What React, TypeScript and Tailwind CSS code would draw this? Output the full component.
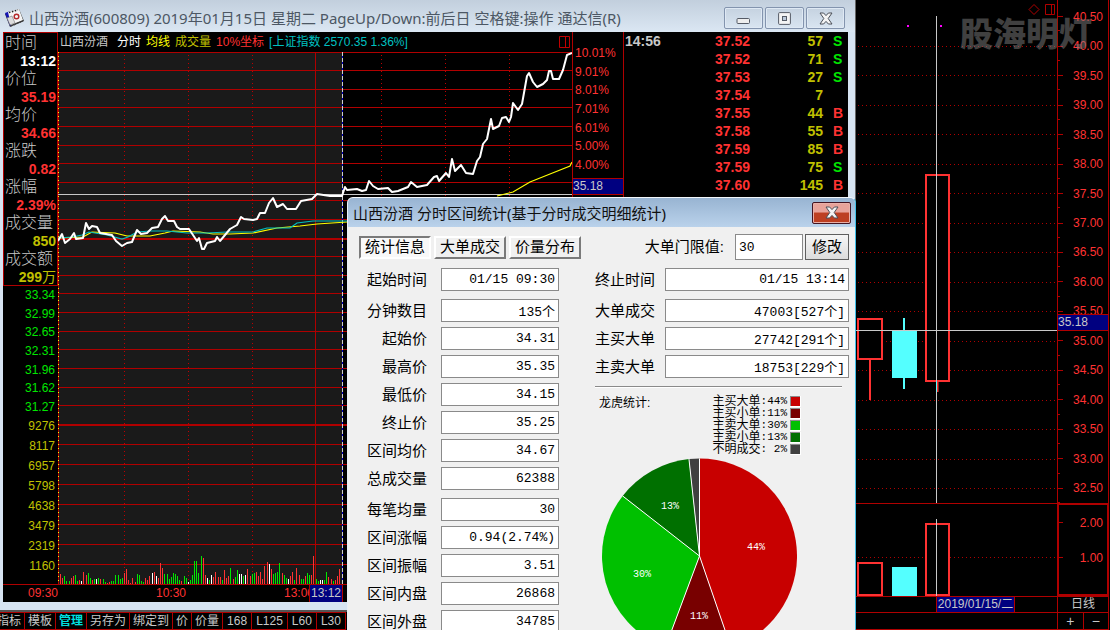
import React from "react";

const cjk = "font-['Liberation_Sans','Noto_Sans_CJK_SC',sans-serif]";
const ui = "font-['Noto_Sans','Noto_Sans_CJK_SC',sans-serif]";
const mono = "font-['Liberation_Mono','Noto_Sans_CJK_SC',monospace]";

type Quote = { label: string; value: string; unit?: string; tone: string };

const quotes: Quote[] = [
  { label: "时间", value: "13:12", tone: "text-white" },
  { label: "价位", value: "35.19", tone: "text-[#ff3232]" },
  { label: "均价", value: "34.66", tone: "text-[#ff3232]" },
  { label: "涨跌", value: "0.82", tone: "text-[#ff3232]" },
  { label: "涨幅", value: "2.39%", tone: "text-[#ff3232]" },
  { label: "成交量", value: "850", tone: "text-[#c0c000]" },
  { label: "成交额", value: "299", unit: "万", tone: "text-[#c0c000]" },
];

const lowPrices = ["33.34", "32.99", "32.65", "32.31", "31.96", "31.62", "31.27"];
const volumes = ["9276", "8117", "6957", "5798", "4638", "3479", "2319", "1160"];
const percents = ["10.01%", "9.01%", "8.01%", "7.01%", "6.01%", "5.00%", "4.00%"];

const trades: [string, string, string, string][] = [
  ["14:56", "37.52", "57", "S"],
  ["", "37.52", "71", "S"],
  ["", "37.53", "27", "S"],
  ["", "37.54", "7", ""],
  ["", "37.55", "44", "B"],
  ["", "37.58", "55", "B"],
  ["", "37.59", "85", "B"],
  ["", "37.59", "75", "S"],
  ["", "37.60", "145", "B"],
];

const volumeBars =
  "r10 r6 g8 g3 g3 r6 r8 g9 g3 r4 w3 r12 r9 g11 g6 r4 g5 w5 g6 r5 g5 g2 r1 r2 g3 g3 g9 g9 g5 g6 r11 r15 r4 r1 r6 r2 g10 g9 g3 g2 r6 r4 r8 w11 r12 w8 r6 r21 r16 g10 g10 g5 g7 g11 g10 g8 g4 r3 g8 g6 w2 g4 g9 g23 g23 g11 g28 r26 r9 w6 g4 w9 r7 r12 r7 r7 g4 r14 r6 r8 g16 r5 g7 g14 w10 w10 g8 w9 r15 r8 g10 g11 r12 r8 r12 r5 r18 r22 w20 r15 g10 g11 g12 g21 r11 g9 g6 w5 r8 r12 g4 r16 r9 g5 g5 r8 g11 g9 r9 r28 g5 g3 w4 w4 g4 g12 r7 r5 g3 r4 r8 r15"
    .split(" ")
    .map((bar) => ({ tone: bar[0], height: Number(bar.slice(1)) }));

const barFill: Record<string, string> = { r: "#ff3232", g: "#00e600", w: "#ffffff" };

const priceLine =
  "58,241 62,234 65,243 70,239 74,233 76,239 83,238 86,223 89,229 92,226 97,227 100,233 112,235 116,241 122,246 127,243 132,242 137,230 141,234 147,233 152,228 158,227 162,219 165,216 168,221 174,221 177,227 180,229 189,229 191,232 197,241 199,238 202,249 204,249 207,243 215,241 217,237 220,241 225,235 230,229 237,225 241,217 244,219 253,220 257,219 260,213 265,213 269,203 273,198 277,207 283,204 287,209 296,209 301,201 312,199 317,194 330,196 342,196 345,187 347,190 357,189 362,191 366,190 369,181 373,186 378,189 388,188 392,192 398,191 408,187 411,182 417,187 427,185 434,177 437,176 439,181 446,173 449,177 452,159 455,171 461,165 466,173 473,174 477,161 480,157 483,144 487,139 491,119 493,129 499,126 502,118 506,117 509,122 511,117 513,103 518,110 522,104 527,76 529,73 533,82 537,87 543,84 547,80 549,71 551,71 553,79 559,79 563,70 567,55 572,53";
const morningAverage =
  "58,238 83,237 92,232 115,233 127,236 150,236 165,233 173,231 200,232 213,234 230,234 253,233 277,228 300,226 317,224 347,222";
const afternoonAverage = "497,196 513,192 530,182 550,174 570,166 572,162";
const indexLine =
  "58,238 72,237 82,235 89,232 107,235 122,239 128,237 137,232 150,231 167,231 187,233 207,233 227,232 253,232 267,228 290,228 297,223 313,221 347,221";

const gridRows = [52, 70, 89, 107, 126, 145, 163, 182, 200, 219, 256, 275, 293, 312, 331, 349, 368, 387, 405, 444, 464, 484, 504, 524, 544, 564];

function IntradayPlot() {
  return (
    <svg viewBox="58 52 514 532" preserveAspectRatio="none" className="block h-full w-full" aria-label="分时走势图">
      <g shapeRendering="crispEdges">
        <rect x="58" y="52" width="284" height="532" fill="#1a1a1a" />
        {gridRows.map((y) => (
          <rect key={y} x="58" y={y} width="514" height="1" fill="#b00000" />
        ))}
        <rect x="58" y="238" width="514" height="2" fill="#b00000" />
        <rect x="58" y="424" width="514" height="2" fill="#b00000" />
        {[124.5, 188.5, 252.5, 381.5, 445.5, 509.5].map((x) => (
          <path key={x} d={`M${x} 55V584`} stroke="#c00000" strokeDasharray="1 3" />
        ))}
        <rect x="315" y="52" width="1" height="532" fill="#b00000" />
        <rect x="58" y="52" width="1" height="532" fill="#b00000" />
        <path d="M58.5 52V584" stroke="#ffff00" strokeDasharray="1 3" />
        <rect x="58" y="194" width="514" height="1" fill="#c8c8c8" />
        {volumeBars.map((bar, i) => (
          <rect key={i} x={60 + Math.round(i * 2.13)} y={584 - bar.height} width="1" height={bar.height} fill={barFill[bar.tone]} />
        ))}
        <path d="M342.5 52V584" stroke="#0000c0" />
        <path d="M342.5 52V584" stroke="#d0d0d0" strokeDasharray="4 2" />
      </g>
      <polyline points={morningAverage} fill="none" stroke="#ffff00" strokeWidth="1.2" />
      <polyline points={afternoonAverage} fill="none" stroke="#ffff00" strokeWidth="1.2" />
      <polyline points={indexLine} fill="none" stroke="#00c0c0" strokeWidth="1.2" />
      <polyline points={priceLine} fill="none" stroke="#ffffff" strokeWidth="2" strokeLinejoin="round" />
    </svg>
  );
}

function PaneIcon() {
  return (
    <svg width="11" height="12" viewBox="0 0 11 12" fill="none" stroke="#c00000">
      <path d="M.5 .5H10.5V11.5H.5ZM6.5 .5V11.5" />
    </svg>
  );
}

function CalendarIcon() {
  return (
    <svg width="21" height="20" viewBox="0 0 21 20" className="shrink-0">
      <path d="M1 6L15 1L20 13L6 19Z" fill="#333" />
      <path d="M1 5L5 3.5L8 16L6 18Z" fill="#1414b4" />
      <path d="M4 4L15 1L19 12L7 17Z" fill="#f4f4f4" />
      <path d="M3 10L8 8L11 15L6 17Z" fill="#ddd" stroke="#777" strokeWidth=".6" />
      <circle cx="12.5" cy="8.5" r="2.3" fill="none" stroke="#b42828" strokeWidth="1.4" />
      <path d="M5 4.5L14 2" stroke="#222" strokeWidth="1.5" strokeDasharray="1.5 1.5" />
      <path d="M7 18L19 13" stroke="#444" strokeWidth="1.3" strokeDasharray="2 1" />
    </svg>
  );
}

const windowButton =
  "flex h-[22px] w-[39px] items-center justify-center rounded-[2px] border border-[#8394ae] bg-linear-to-b from-[#c5d2e0] to-[#d9e5f1] shadow-[inset_0_0_0_1px_#dfe9f4]";

function TitleBar() {
  return (
    <header className={`${ui} flex h-8 items-center bg-linear-to-b from-[#c2cfdd] to-[#dbe7f3] pr-[10px] pl-1 pt-1`}>
      <CalendarIcon />
      <h1 className="ml-1 flex-1 truncate text-[15px] leading-6 text-[#4c5764]">
        山西汾酒(600809) 2019年01月15日 星期二 PageUp/Down:前后日 空格键:操作 通达信(R)
      </h1>
      <div className="flex gap-[2px]">
        <button aria-label="最小化" className={windowButton}>
          <svg width="15" height="12" viewBox="0 0 15 12">
            <rect x="1" y="6.5" width="12.5" height="5" rx="1" fill="#eee" stroke="#555b66" />
          </svg>
        </button>
        <button aria-label="最大化" className={windowButton}>
          <svg width="13" height="13" viewBox="0 0 13 13">
            <rect x=".6" y=".6" width="11.8" height="11.8" rx="1" fill="#f4f4f4" stroke="#555b66" />
            <rect x="4.5" y="4.5" width="4" height="4" fill="#bccadb" stroke="#555b66" />
          </svg>
        </button>
        <button aria-label="关闭" className={windowButton}>
          <CloseMark />
        </button>
      </div>
    </header>
  );
}

function CloseMark() {
  return (
    <svg width="14" height="13" viewBox="0 0 14 13">
      <path
        d="M1 1H4.6L7 3.6L9.4 1H13L9.2 6.5L13 12H9.4L7 9.4L4.6 12H1L4.8 6.5Z"
        fill="#f4f4f4"
        stroke="#4a4f58"
        strokeLinejoin="round"
      />
    </svg>
  );
}

function QuoteColumn() {
  return (
    <aside className="flex w-[55px] shrink-0 flex-col">
      <dl className="h-[254px] border border-[#b00000] pt-px text-[16px] leading-[18px]">
        {quotes.map((q) => (
          <React.Fragment key={q.label}>
            <dt className="h-[18px] pl-px font-light text-[#c8c8c8]">{q.label}</dt>
            <dd className={`h-[18px] pr-px text-right text-[14px] font-bold ${q.tone}`}>
              {q.value}
              {q.unit && <span className="font-normal">{q.unit}</span>}
            </dd>
          </React.Fragment>
        ))}
      </dl>
      <ul className="flex h-[130px] flex-col pr-[3px] text-right text-[#00e600]">
        {lowPrices.map((p) => (
          <li key={p} className="flex flex-1 items-center justify-end">{p}</li>
        ))}
      </ul>
      <ul className="pr-[3px] text-right text-[#c0c000]">
        {volumes.map((v) => (
          <li key={v} className="h-5 leading-5">{v}</li>
        ))}
      </ul>
      <div className="mt-auto h-[18px] border-t border-[#b00000] text-right leading-[17px] text-[#ff3232]">09:30</div>
    </aside>
  );
}

function IntradayColumn() {
  return (
    <section className="flex min-w-0 flex-1 flex-col">
      <div className="flex h-5 shrink-0 items-center gap-[5px] pr-[2px] pl-[2px] whitespace-nowrap">
        <span className="mr-1 text-[#c8c8c8]">山西汾酒</span>
        <span className="text-white">分时</span>
        <span className="text-[#ffff00]">均线</span>
        <span className="text-[#c0c000]">成交量</span>
        <span className="text-[#ff3232]">10%坐标</span>
        <span className="flex-1 text-[#00c0c0]">[上证指数 2570.35 1.36%]</span>
        <PaneIcon />
      </div>
      <div className="min-h-0 flex-1">
        <IntradayPlot />
      </div>
      <div className="relative flex h-[18px] shrink-0 border-t border-[#b00000] text-right leading-[17px] text-[#ff3232]">
        <span className="w-32">10:30</span>
        <span className="w-32">13:00</span>
        <span className="absolute top-0 left-[251px] h-[17px] w-[34px] border-x border-[#b00000] bg-[#000080] text-center text-[#c8c8c8]">
          13:12
        </span>
      </div>
    </section>
  );
}

function PercentAxis() {
  return (
    <aside className="relative w-[52px] shrink-0 border-x border-[#b00000] pt-3 text-[#ff3232]">
      <ul className="flex h-[130px] flex-col">
        {percents.map((p) => (
          <li key={p} className="flex flex-1 items-center pl-[2px]">{p}</li>
        ))}
      </ul>
      <span className="absolute top-[146px] left-0 h-[17px] w-full border-y border-[#b00000] bg-[#000080] leading-[15px] text-[#c8c8c8]">
        35.18
      </span>
    </aside>
  );
}

function TradeList() {
  return (
    <section className="w-[224px] shrink-0">
      <table className="w-full text-[14px] leading-[18px] font-bold">
        <tbody>
          {trades.map(([time, price, lots, side], i) => (
            <tr key={i} className="h-[18px]">
              <td className="w-12 p-0 pl-px text-[#c8c8c8]">{time}</td>
              <td className="p-0 text-right text-[#ff3232]">{price}</td>
              <td className="w-[73px] p-0 text-right text-[#c0c000]">{lots}</td>
              <td className={side === "S" ? "w-[25px] p-0 pl-[10px] text-[#00e600]" : "w-[25px] p-0 pl-[10px] text-[#ff3232]"}>{side}</td>
            </tr>
          ))}
        </tbody>
      </table>
    </section>
  );
}

const templateTabs = ["指标", "模板", "管理", "另存为", "绑定到", "价", "价量", "168", "L125", "L60", "L30"];

function TemplateBar() {
  return (
    <nav className="flex h-5 shrink-0 items-center overflow-hidden border-t-2 border-[#555] bg-black text-[12px]">
      <div className="-ml-[6px] flex h-[18px] border-y border-[#b00000]">
        {templateTabs.map((t) => (
          <button
            key={t}
            className={
              t === "管理"
                ? "border-r border-[#b00000] px-[3px] leading-4 font-bold text-[#00e0e0]"
                : /^[0-9L]/.test(t)
                  ? "border-r border-[#b00000] px-1 leading-4 text-[#c8c8c8]"
                  : "border-r border-[#b00000] px-[3px] leading-4 text-[#c8c8c8]"
            }
          >
            {t}
          </button>
        ))}
      </div>
    </nav>
  );
}

const dailyPrices = ["40.50", "40.00", "39.50", "39.00", "38.50", "38.00", "37.50", "37.00", "36.50", "36.00", "35.50", "35.00", "34.50", "34.00", "33.50", "33.00", "32.50"];

function DailyPanel() {
  return (
    <section className="relative flex min-w-0 flex-col overflow-hidden bg-black pr-px text-[#ff3232]">
      <div className="flex min-h-0 flex-[503]">
        <div className="min-w-0 flex-1">
          <svg viewBox="856 0 201 503" preserveAspectRatio="none" className="block h-full w-full" aria-label="日线图">
            {dailyPrices.slice(1).map((p, i) => (
              <path key={p} d={`M858 ${Math.round(46 + i * 29.47) + 0.5}H1057`} stroke="#b00000" strokeDasharray="1 3" shapeRendering="crispEdges" />
            ))}
            <g fill="#000" stroke="#ff3232" strokeWidth="2">
              <path d="M858 319H882V359H858ZM870 359V400" />
              <path d="M926 175H949V381H926ZM937.5 381V392" />
            </g>
            <path d="M904 318V389" stroke="#54ffff" strokeWidth="2" />
            <rect x="892" y="331" width="25" height="47" fill="#54ffff" />
            <rect x="936" y="16" width="1" height="487" fill="#c8c8c8" />
            <rect x="856" y="330" width="201" height="1" fill="#c8c8c8" />
            <rect x="936" y="381" width="1" height="11" fill="#54ffff" />
            <rect x="907" y="25" width="2" height="2" fill="#ff00ff" />
            <rect x="940" y="25" width="2" height="2" fill="#ff00ff" />
            <path d="M1034 4.5L1039 9.5L1034 14.5L1029 9.5Z" fill="none" stroke="#b00000" />
            <path d="M1045.5 4.5H1054.5V14.5H1045.5ZM1051.5 4.5V14.5" fill="none" stroke="#b00000" />
          </svg>
        </div>
        <div className="relative flex w-[52px] shrink-0 flex-col border-x border-[#b00000] pt-[2px]">
          {dailyPrices.map((p) => (
            <div key={p} className="relative flex flex-1 items-center justify-end pr-[5px]">
              <i className="absolute left-0 h-px w-[5px] bg-[#b00000]" />
              <i className="absolute bottom-0 left-0 h-px w-[2px] bg-[#b00000]" />
              {p}
            </div>
          ))}
          <span className="absolute top-[314px] left-0 h-[17px] w-full border-y border-[#b00000] bg-[#000080] leading-[15px] text-[#c8c8c8]">
            35.18
          </span>
        </div>
      </div>
      <div className="flex min-h-0 flex-[92] border-t border-[#b00000]">
        <div className="min-w-0 flex-1">
          <svg viewBox="856 504 201 92" preserveAspectRatio="none" className="block h-full w-full" aria-label="成交量">
            <path d="M858 557.5H1057" stroke="#b00000" strokeDasharray="1 3" shapeRendering="crispEdges" />
            <g fill="#000" stroke="#ff3232" strokeWidth="2">
              <path d="M858 563H882V595H858Z" />
              <path d="M926 524H949V595H926Z" />
            </g>
            <rect x="892" y="567" width="25" height="29" fill="#54ffff" />
            <rect x="936" y="519" width="1" height="77" fill="#c8c8c8" />
          </svg>
        </div>
        <div className="flex w-[52px] shrink-0 flex-col border-2 border-t border-[#b00000] text-right">
          {["2.00", "1.00"].map((v) => (
            <div key={v} className="relative flex h-[35px] items-center justify-end pr-1">
              <i className="absolute left-0 h-px w-1 bg-[#b00000]" />
              {v}
            </div>
          ))}
        </div>
      </div>
      <div className="flex h-4 shrink-0 border-t border-[#b00000] leading-[15px] text-[#c8c8c8]">
        <div className="min-w-0 flex-1 pl-20">
          <span className="block w-[79px] border-x border-[#b00000] bg-[#000080] text-center whitespace-nowrap">2019/01/15/二</span>
        </div>
        <div className="w-[52px] shrink-0 border-x border-[#b00000] text-center">日线</div>
      </div>
      <div className="flex h-[18px] shrink-0 justify-end border-y border-[#b00000] text-[14px] leading-4 text-[#c8c8c8]">
        <div className="flex w-[52px] border-x border-[#b00000]">
          <button aria-label="放大" className="flex-1 border-r border-[#b00000]">+</button>
          <button aria-label="缩小" className="flex-1">−</button>
        </div>
      </div>
      <span className="pointer-events-none absolute top-[15px] right-[18px] text-[33px] leading-10 font-black text-[#808080]/50">股海明灯</span>
    </section>
  );
}

type Stat = { label: string; value: string };

const intervalStats: Stat[][] = [
  [{ label: "起始时间", value: "01/15 09:30" }],
  [
    { label: "分钟数目", value: "135个" },
    { label: "起始价", value: "34.31" },
    { label: "最高价", value: "35.35" },
    { label: "最低价", value: "34.15" },
    { label: "终止价", value: "35.25" },
    { label: "区间均价", value: "34.67" },
    { label: "总成交量", value: "62388" },
  ],
  [
    { label: "每笔均量", value: "30" },
    { label: "区间涨幅", value: "0.94(2.74%)" },
    { label: "区间振幅", value: "3.51" },
    { label: "区间内盘", value: "26868" },
    { label: "区间外盘", value: "34785" },
  ],
];

const blockStats: Stat[][] = [
  [{ label: "终止时间", value: "01/15 13:14" }],
  [
    { label: "大单成交", value: "47003[527个]" },
    { label: "主买大单", value: "27742[291个]" },
    { label: "主卖大单", value: "18753[229个]" },
  ],
];

function StatFields({ groups, wide }: { groups: Stat[][]; wide?: boolean }) {
  return (
    <div className="flex flex-col gap-2">
      {groups.map((rows, g) => (
        <div key={g} className="flex flex-col gap-[5px]">
          {rows.map((r) => (
            <label key={r.label} className={wide ? "flex h-[23px] items-center gap-[10px]" : "flex h-[23px] items-center gap-[14px]"}>
              <span className="w-[60px] shrink-0 text-right text-[15px] whitespace-nowrap">{r.label}</span>
              <input
                readOnly
                value={r.value}
                className={`${mono} h-[23px] min-w-0 flex-1 border border-[#8a8a8a] bg-white px-[3px] text-right text-[13px] text-black`}
              />
            </label>
          ))}
        </div>
      ))}
    </div>
  );
}

const slices = [
  { name: "主买大单", share: "44%", from: 0, to: 161, color: "#c80000", x: 155, y: 92 },
  { name: "主买小单", share: "11%", from: 161, to: 200.5, color: "#780000", x: 98, y: 161 },
  { name: "主卖大单", share: "30%", from: 200.5, to: 308, color: "#00c000", x: 41, y: 119 },
  { name: "主卖小单", share: "13%", from: 308, to: 353.8, color: "#007000", x: 69, y: 51 },
  { name: "不明成交", share: "2%", from: 353.8, to: 360, color: "#404040", x: 0, y: 0 },
];

function rim(deg: number) {
  const a = (deg * Math.PI) / 180;
  return `${98.5 + 97.5 * Math.sin(a)} ${98 - 97.5 * Math.cos(a)}`;
}

function Pie() {
  return (
    <svg width="196" height="196" viewBox="0 0 196 196" aria-label="龙虎统计" className="shrink-0">
      {slices.map((s) => (
        <path key={s.name} d={`M98.5 98L${rim(s.from)}A97.5 97.5 0 0 1 ${rim(s.to)}Z`} fill={s.color} />
      ))}
      {slices.map((s) => (
        <path key={s.name} d={`M98.5 98L${rim(s.from)}`} stroke="#fff" />
      ))}
      {slices.slice(0, 4).map((s) => (
        <text key={s.name} x={s.x} y={s.y} textAnchor="middle" fill="#fff" className={`${mono} text-[10px]`}>
          {s.share}
        </text>
      ))}
    </svg>
  );
}

const raised = "h-[23px] w-[72px] border-2 border-t-white border-l-white border-r-[#7a7a7a] border-b-[#7a7a7a] bg-[#f0f0f0] text-[15px] leading-[18px]";
const sunken = "h-[23px] w-[72px] border-2 border-t-[#7a7a7a] border-l-[#7a7a7a] border-r-white border-b-white bg-[#f8f8f8] text-[15px] leading-[18px]";

function StatsDialog() {
  return (
    <div
      role="dialog"
      aria-label="分时区间统计"
      className="absolute top-[197px] right-0 bottom-0 flex w-[509px] flex-col overflow-hidden rounded-t-[6px] border border-b-0 border-[#e8f0f8] border-t-[#f4f8fc] border-r-[#40bfe8] bg-[#f0f0f0] text-black"
    >
      <header className={`${ui} flex h-[29px] shrink-0 items-center bg-linear-to-b from-[#98b4d2] to-[#bad2eb] pr-1 pl-[5px]`}>
        <h2 className="flex-1 text-[15px] leading-6 text-[#101010]">山西汾酒 分时区间统计(基于分时成交明细统计)</h2>
        <button
          aria-label="关闭"
          className="flex h-[22px] w-[39px] items-center justify-center rounded-[2px] border border-[#431422] bg-linear-to-b from-[#e8a39a] from-45% to-[#bd3f22] to-50% shadow-[inset_0_0_0_1px_#e9b0a8]"
        >
          <CloseMark />
        </button>
      </header>
      <div className="flex items-center pt-[7px] pr-[6px] pl-[11px]">
        <div role="tablist" className="flex flex-1 gap-[3px]">
          <button role="tab" aria-selected="true" className={sunken}>统计信息</button>
          <button role="tab" aria-selected="false" className={raised}>大单成交</button>
          <button role="tab" aria-selected="false" className={raised}>价量分布</button>
        </div>
        <label htmlFor="threshold" className="mr-[11px] text-[15px]">大单门限值:</label>
        <input id="threshold" defaultValue="30" className={`${mono} h-[26px] w-[68px] border border-[#8a8a8a] bg-white px-[3px] text-[13px]`} />
        <button className="ml-[2px] h-[26px] w-11 border border-[#5f5f5f] bg-linear-to-b from-[#f6f6f6] to-[#dcdcdc] text-[15px] leading-6">修改</button>
      </div>
      <div className="flex min-h-0 flex-1 gap-9 pt-2 pr-[6px] pl-[19px]">
        <div className="w-[192px] shrink-0">
          <StatFields groups={intervalStats} />
        </div>
        <div className="min-w-0 flex-1">
          <StatFields groups={blockStats} wide />
          <hr className="mt-2 mr-[7px] border-t border-[#8a8a8a] shadow-[0_1px_0_#fff]" />
          <div className="flex justify-between pt-2 pr-12 pl-1 text-[12px]">
            <span className="leading-4">龙虎统计:</span>
            <ul>
              {slices.map((s) => (
                <li key={s.name} className="flex h-3 items-center gap-[3px] leading-3">
                  <span className="flex items-center whitespace-pre">
                    {s.name}
                    <span className={`${mono} text-[11px]`}>{`:${s.share.padStart(3)}`}</span>
                  </span>
                  <svg width="11" height="11" viewBox="0 0 11 11">
                    <rect width="11" height="11" fill="#fff" />
                    <path d="M0 0H10V10H0Z" fill="#8a8a8a" />
                    <path d="M1 1H10V10H1Z" fill={s.color} />
                  </svg>
                </li>
              ))}
            </ul>
          </div>
          <div className="pt-[3px] pl-[6px]">
            <Pie />
          </div>
        </div>
      </div>
    </div>
  );
}

export default function App() {
  return (
    <main className={`${cjk} grid h-screen grid-cols-[856fr_254fr] overflow-hidden bg-black text-[12px] leading-4`}>
      <div className="relative flex min-w-0 flex-col overflow-hidden">
        <section className="flex min-h-0 flex-1 flex-col border-r border-[#666] bg-[#d7e4f2]">
          <TitleBar />
          <div className="mr-[7px] mb-2 ml-[3px] flex min-h-0 flex-1 bg-black">
            <QuoteColumn />
            <IntradayColumn />
            <PercentAxis />
            <TradeList />
          </div>
        </section>
        <TemplateBar />
        <StatsDialog />
      </div>
      <DailyPanel />
    </main>
  );
}
